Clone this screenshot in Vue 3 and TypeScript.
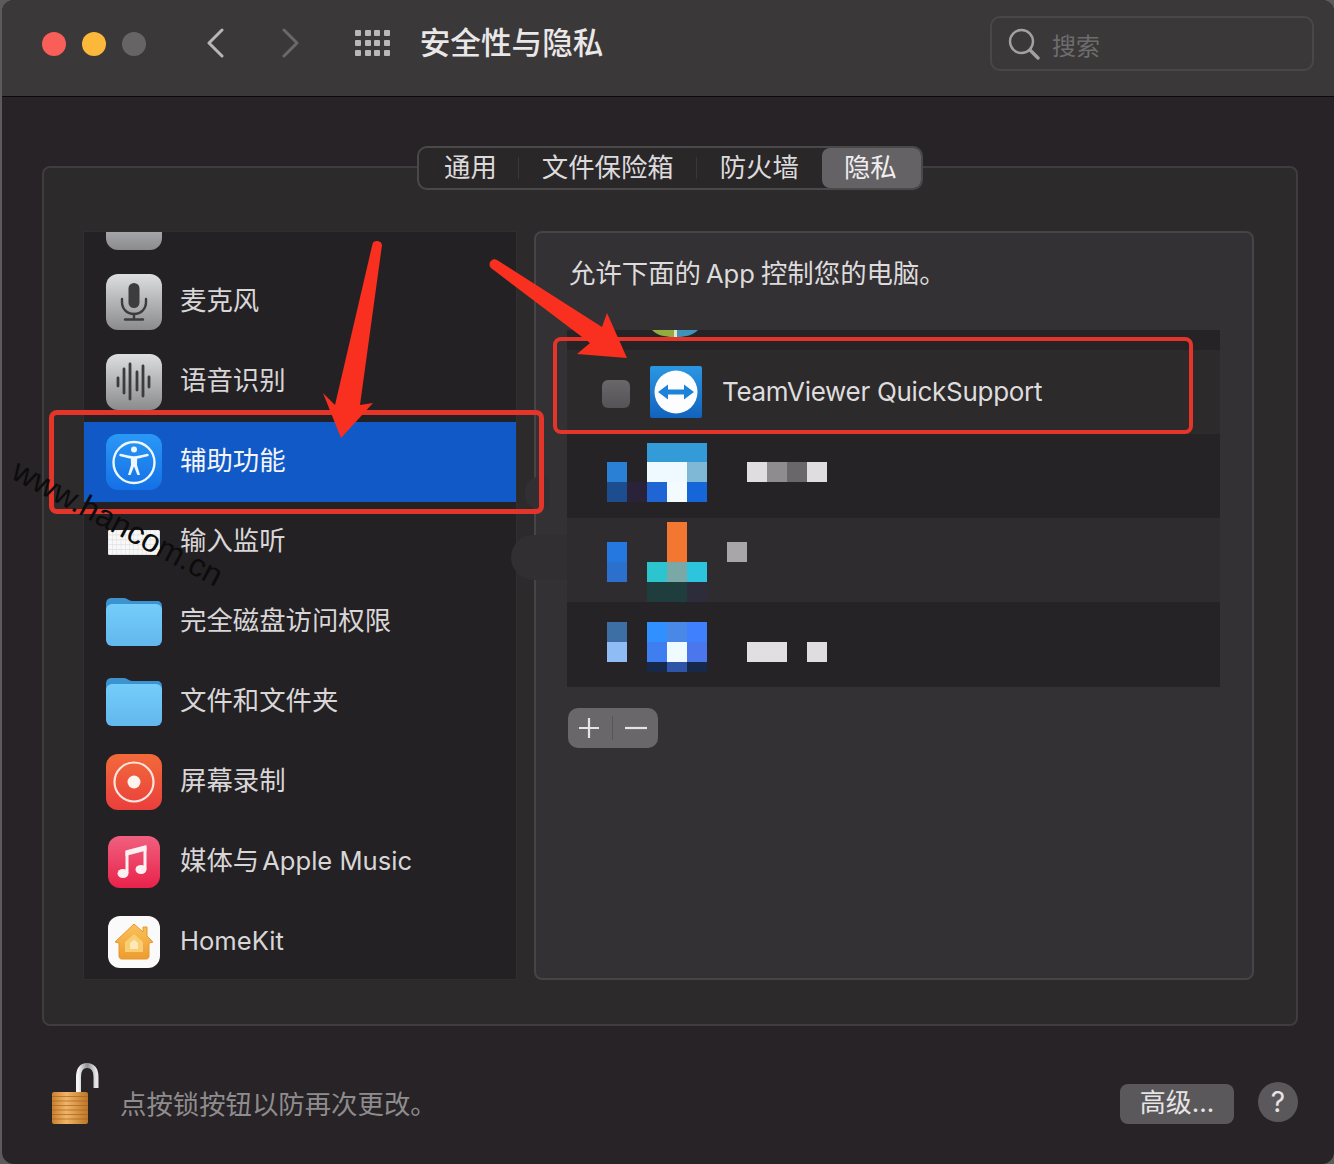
<template>
  <div class="screen">
    <div class="window">
      <header class="titlebar">
        <div class="lights">
          <span class="light red"></span>
          <span class="light yellow"></span>
          <span class="light gray"></span>
        </div>
        <svg class="chev" width="18" height="30" viewBox="0 0 18 30">
          <path d="M16 2 L3 15 L16 28" fill="none" stroke="#b9b6b8" stroke-width="3" stroke-linecap="round" stroke-linejoin="round" />
        </svg>
        <svg class="chev next" width="18" height="30" viewBox="0 0 18 30">
          <path d="M2 2 L15 15 L2 28" fill="none" stroke="#6b686a" stroke-width="3" stroke-linecap="round" stroke-linejoin="round" />
        </svg>
        <div class="apps">
          <span v-for="n in 12" :key="n"></span>
        </div>
        <h1 class="title">安全性与隐私</h1>
        <div class="search">
          <svg width="32" height="32" viewBox="0 0 32 32">
            <circle cx="13.5" cy="13.5" r="11.5" fill="none" stroke="#a3a0a2" stroke-width="2.4" />
            <path d="M22 22 L30 30" stroke="#a3a0a2" stroke-width="3.4" stroke-linecap="round" />
          </svg>
          <span>搜索</span>
        </div>
      </header>

      <main class="content">
        <section class="box">
          <nav class="tabs">
            <span
              v-for="(tab, index) in tabs"
              :key="tab"
              class="tab"
              :class="{ active: index === 3, first: index === 0, sep: index < 2 }"
            >{{ tab }}</span>
          </nav>

          <div class="columns">
            <ul class="services">
              <li
                v-for="item in services"
                :key="item.key"
                class="service"
                :class="{ selected: item.key === 'access' }"
              >
                <!-- иконки -->
                <svg v-if="item.key === 'camera'" class="icon" viewBox="0 0 56 56">
                  <rect width="56" height="56" rx="12" fill="url(#grayTile)" />
                </svg>
                <svg v-else-if="item.key === 'mic'" class="icon" viewBox="0 0 56 56">
                  <rect width="56" height="56" rx="12" fill="url(#grayTile)" />
                  <rect x="22.5" y="9" width="11" height="25" rx="5.5" fill="#3c3c3f" />
                  <path d="M16 25 V28 C16 35 21 40 28 40 C35 40 40 35 40 28 V25" fill="none" stroke="#3c3c3f" stroke-width="2.4" stroke-linecap="round" />
                  <path d="M28 40 V45.500 M19 45.500 H37" stroke="#3c3c3f" stroke-width="2.4" stroke-linecap="round" />
                </svg>
                <svg v-else-if="item.key === 'speech'" class="icon" viewBox="0 0 56 56">
                  <rect width="56" height="56" rx="12" fill="url(#grayTile)" />
                  <path d="M12 24 V32 M18 15 V39 M24 10 V45 M31 18 V36 M37 12 V42 M43 23 V33" stroke="#3c3c3f" stroke-width="2.800" stroke-linecap="round" />
                </svg>
                <svg v-else-if="item.key === 'access'" class="icon" viewBox="0 0 56 56">
                  <defs>
                    <linearGradient id="accessTile" x1="0" y1="0" x2="0" y2="1">
                      <stop offset="0" stop-color="#2a98f6" />
                      <stop offset="1" stop-color="#1470e6" />
                    </linearGradient>
                  </defs>
                  <rect width="56" height="56" rx="12" fill="url(#accessTile)" />
                  <circle cx="28" cy="28.500" r="20.500" fill="none" stroke="#eef6ff" stroke-width="2.400" />
                  <circle cx="28" cy="15.500" r="3" fill="#eef6ff" />
                  <path d="M14.500 21 C20 22.500 24 23.500 28 23.500 C32 23.500 36 22.500 41.500 21" fill="none" stroke="#eef6ff" stroke-width="2.400" stroke-linecap="round" />
                  <path d="M24.800 23 H31.200 L31 31 L34 41 H31.400 L28 32.500 L24.600 41 H22 L25 31 Z" fill="#eef6ff" />
                </svg>
                <svg v-else-if="item.key === 'input'" class="icon" viewBox="0 0 56 56">
                  <rect x="2" y="16" width="52" height="25" rx="1.500" fill="#dcdcde" />
                  <rect
                    v-for="k in keyCaps"
                    :key="k.id"
                    :x="k.x"
                    :y="k.y"
                    :width="k.w"
                    height="4.200"
                    fill="#f8f8f8"
                  />
                </svg>
                <svg v-else-if="item.key === 'disk' || item.key === 'files'" class="icon" viewBox="0 0 56 56">
                  <path d="M0 10 C0 6 2 4 6 4 H18 C21 4 23 7 26 7 H51 C54 7 56 9 56 12 V30 H0 Z" fill="#3d93cf" />
                  <rect y="10" width="56" height="42" rx="6" fill="url(#folderTile)" />
                </svg>
                <svg v-else-if="item.key === 'screen'" class="icon" viewBox="0 0 56 56">
                  <defs>
                    <linearGradient id="recTile" x1="0" y1="0" x2="0" y2="1">
                      <stop offset="0" stop-color="#f26a3a" />
                      <stop offset="1" stop-color="#ea3f3c" />
                    </linearGradient>
                  </defs>
                  <rect width="56" height="56" rx="12" fill="url(#recTile)" />
                  <circle cx="28" cy="28" r="19.500" fill="none" stroke="#fbe5df" stroke-width="2.200" />
                  <circle cx="28" cy="28" r="6.500" fill="#fdf3ef" />
                </svg>
                <svg v-else-if="item.key === 'music'" class="icon small" viewBox="0 0 52 52">
                  <defs>
                    <linearGradient id="musicTile" x1="0" y1="0" x2="0" y2="1">
                      <stop offset="0" stop-color="#f0607f" />
                      <stop offset="1" stop-color="#e9224a" />
                    </linearGradient>
                  </defs>
                  <rect width="52" height="52" rx="12" fill="url(#musicTile)" />
                  <path d="M17.500 14.500 L38.500 9 V14.500 L17.500 20 Z" fill="#fdf0f2" />
                  <path d="M19 15 V37 M37 11 V33" fill="none" stroke="#fdf0f2" stroke-width="3" />
                  <ellipse cx="15" cy="37.500" rx="5.500" ry="4.500" fill="#fdf0f2" />
                  <ellipse cx="33" cy="33.500" rx="5.500" ry="4.500" fill="#fdf0f2" />
                </svg>
                <svg v-else class="icon small" viewBox="0 0 52 52">
                  <defs>
                    <linearGradient id="homeFill" x1="0" y1="0" x2="0" y2="1">
                      <stop offset="0" stop-color="#f9c25a" />
                      <stop offset="1" stop-color="#ee9c2f" />
                    </linearGradient>
                  </defs>
                  <rect width="52" height="52" rx="12" fill="#fbfafa" />
                  <path d="M7 26 L26 8 L35 16 V11 H39 V20 L45 26 L41 27 V40 C41 42 40 43 38 43 H14 C12 43 11 42 11 40 V27 Z" fill="url(#homeFill)" stroke="#e8962c" stroke-width="1" stroke-linejoin="round" />
                  <path d="M17 26 L26 18 L35 26 V36 H17 Z" fill="#f8cd74" />
                  <path d="M22 27 L26 23.500 L30 27 V33 H22 Z" fill="#fde9b8" />
                </svg>
                <span class="label">
                  <span v-if="item.label" class="han">{{ item.label }}</span>
                  <span v-if="item.latin" class="latin">{{ item.latin }}</span>
                </span>
              </li>
            </ul>

            <div class="panel">
              <p class="hint">
                <span>允许下面的</span><span class="app">App</span><span>控制您的电脑。</span>
              </p>
              <div class="table">
                <div class="stub">
                  <svg width="46" height="7" viewBox="0 0 46 7">
                    <path d="M0 0 H22 V7 C12 7 5 5 0 0 Z" fill="#8fae3f" />
                    <path d="M22 0 H25 V7 H22 Z" fill="#e8e3cf" />
                    <path d="M25 0 H46 C41 5 34 7 25 7 Z" fill="#3d93b8" />
                  </svg>
                </div>
                <div class="row tv">
                  <span class="check"></span>
                  <svg class="tv-icon" width="52" height="52" viewBox="0 0 52 52">
                    <defs>
                      <linearGradient id="tvTile" x1="0" y1="0" x2="0" y2="1">
                        <stop offset="0" stop-color="#2b97e3" />
                        <stop offset="1" stop-color="#1262bd" />
                      </linearGradient>
                    </defs>
                    <rect width="52" height="52" rx="2" fill="url(#tvTile)" />
                    <circle cx="26" cy="26" r="21.500" fill="#fbfdff" />
                    <path d="M8 26 L18 18.500 V23.500 H34 V18.500 L44 26 L34 33.500 V28.500 H18 V33.500 Z" fill="#1d83d8" />
                  </svg>
                  <span class="tv-name">TeamViewer QuickSupport</span>
                </div>
                <svg
                  v-for="row in blurred"
                  :key="row.top"
                  class="row mosaic"
                  :class="{ dark: row.dark }"
                  width="653"
                  :height="row.height"
                  :viewBox="`567 ${row.top} 653 ${row.height}`"
                >
                  <rect
                    v-for="(c, i) in row.cells"
                    :key="i"
                    :x="c[0]"
                    :y="c[1]"
                    :width="c[2]"
                    :height="c[3]"
                    :fill="c[4]"
                  />
                </svg>
              </div>
              <div class="addremove">
                <span>
                  <svg width="22" height="22" viewBox="0 0 22 22">
                    <path d="M11 1 V21 M1 11 H21" stroke="#e6e4e6" stroke-width="2.200" />
                  </svg>
                </span>
                <i></i>
                <span>
                  <svg width="22" height="22" viewBox="0 0 22 22">
                    <path d="M0 11 H22" stroke="#e6e4e6" stroke-width="2.200" />
                  </svg>
                </span>
              </div>
            </div>
          </div>
        </section>

        <footer class="footer">
          <svg class="lock" width="48" height="62" viewBox="0 0 48 62">
            <defs>
              <linearGradient id="shackle" x1="0" y1="0" x2="1" y2="0">
                <stop offset="0" stop-color="#f4f4f6" />
                <stop offset="0.5" stop-color="#8f9095" />
                <stop offset="1" stop-color="#e6e6ea" />
              </linearGradient>
              <linearGradient id="lockBody" x1="0" y1="0" x2="1" y2="0">
                <stop offset="0" stop-color="#c97f2e" />
                <stop offset="0.4" stop-color="#f0b568" />
                <stop offset="1" stop-color="#bd7526" />
              </linearGradient>
            </defs>
            <path d="M26.500 30 V14 C26.500 6 30 2.500 35 2.500 C40 2.500 44 6 44 14 V25" fill="none" stroke="url(#shackle)" stroke-width="5" />
            <rect x="0" y="29" width="36" height="32" rx="2" fill="url(#lockBody)" />
            <path d="M0 33.500 H36 M0 38 H36 M0 42.500 H36 M0 47 H36 M0 51.500 H36 M0 56 H36" stroke="#a9641e" stroke-width="1" opacity="0.7" />
          </svg>
          <span class="lock-text">点按锁按钮以防再次更改。</span>
          <button class="advanced">高级...</button>
          <span class="help">?</span>
        </footer>
      </main>
    </div>

    <!-- общие градиенты для иконок -->
    <svg class="defs" width="0" height="0">
      <defs>
        <linearGradient id="grayTile" x1="0" y1="0" x2="0" y2="1">
          <stop offset="0" stop-color="#dcdee0" />
          <stop offset="1" stop-color="#8b8b8c" />
        </linearGradient>
        <linearGradient id="folderTile" x1="0" y1="0" x2="0" y2="1">
          <stop offset="0" stop-color="#74cdfb" />
          <stop offset="1" stop-color="#62b7ec" />
        </linearGradient>
      </defs>
    </svg>

    <!-- следы замазки и разметка поверх скриншота -->
    <div class="smudge smudge-low"></div>
    <div class="smudge smudge-high"></div>
    <div class="mark mark-list"></div>
    <div class="mark mark-row"></div>
    <svg class="arrows" width="1334" height="1164" viewBox="0 0 1334 1164">
      <path d="M372.500 244 C373 240 381.500 240 382 245 L360 405 L373 403 L341 438 L323 393 L335 405 Z" fill="#f9301f" />
      <path d="M497 260 L602 327 L607 313 L627 358 L577 354 L590 343 L491 268 C487 264 492 257 497 260 Z" fill="#f9301f" />
    </svg>
    <span class="watermark">www.hancom.cn</span>
  </div>
</template>

<script setup lang="ts">
type Cell = [number, number, number, number, string]

interface BlurredRow {
  top: number
  height: number
  dark: boolean
  cells: Cell[]
}

const tabs = ['通用', '文件保险箱', '防火墙', '隐私']

const services = [
  { key: 'camera', label: '' },
  { key: 'mic', label: '麦克风' },
  { key: 'speech', label: '语音识别' },
  { key: 'access', label: '辅助功能' },
  { key: 'input', label: '输入监听' },
  { key: 'disk', label: '完全磁盘访问权限' },
  { key: 'files', label: '文件和文件夹' },
  { key: 'screen', label: '屏幕录制' },
  { key: 'music', label: '媒体与', latin: 'Apple Music' },
  { key: 'home', label: '', latin: 'HomeKit' },
]

// клавиши маленькой клавиатуры
const keyCaps: { id: string; x: number; y: number; w: number }[] = []
for (let r = 0; r < 5; r++) {
  for (let c = 0; c < 12; c++) {
    keyCaps.push({ id: `${r}-${c}`, x: 2.5 + c * 4.25, y: 16.4 + r * 4.9, w: 3.8 })
  }
}

// пикселизованные строки таблицы, координаты как на экране
const blurred: BlurredRow[] = [
  {
    top: 434,
    height: 84,
    dark: true,
    cells: [
      [607, 462, 20, 20, '#2a80d5'],
      [607, 482, 20, 20, '#1c4d8f'],
      [627, 482, 20, 20, '#2a2238'],
      [647, 443, 60, 19, '#339bd8'],
      [647, 462, 40, 20, '#eefaff'],
      [687, 462, 20, 20, '#7fb8d6'],
      [647, 482, 20, 20, '#1f66d4'],
      [667, 482, 20, 20, '#f4fbff'],
      [687, 482, 20, 20, '#1566d8'],
      [747, 462, 20, 20, '#e0dde0'],
      [767, 462, 20, 20, '#8f8c8f'],
      [787, 462, 20, 20, '#6a676a'],
      [807, 462, 20, 20, '#e0dde0'],
    ],
  },
  {
    top: 518,
    height: 84,
    dark: false,
    cells: [
      [607, 542, 20, 20, '#2478e0'],
      [607, 562, 20, 20, '#2a70cc'],
      [667, 522, 20, 40, '#f27730'],
      [647, 562, 20, 20, '#2cc5cf'],
      [667, 562, 20, 20, '#79a8a6'],
      [687, 562, 20, 20, '#2cc5dd'],
      [647, 582, 40, 20, '#1e3d3c'],
      [687, 582, 20, 20, '#2c2c3a'],
      [727, 542, 20, 20, '#a9a6a9'],
    ],
  },
  {
    top: 602,
    height: 85,
    dark: true,
    cells: [
      [607, 622, 20, 20, '#3d6fa5'],
      [607, 642, 20, 20, '#8fbcf5'],
      [647, 622, 20, 20, '#3090ff'],
      [667, 622, 20, 20, '#4a88e8'],
      [687, 622, 20, 20, '#3f80ff'],
      [647, 642, 20, 20, '#3f7ef0'],
      [667, 642, 20, 20, '#f0fbff'],
      [687, 642, 20, 20, '#4a78ec'],
      [647, 662, 20, 10, '#17294a'],
      [667, 662, 20, 10, '#2f55a8'],
      [687, 662, 20, 10, '#17294a'],
      [747, 642, 40, 20, '#e2dfe2'],
      [807, 642, 20, 20, '#e0dde0'],
    ],
  },
]
</script>

<style>
html,
body {
  margin: 0;
  background: #5c5a5b;
}
</style>

<style scoped>
* {
  box-sizing: border-box;
}

.screen {
  position: relative;
  width: 1334px;
  height: 1164px;
  overflow: hidden;
  padding-left: 2px;
  font-family: Inter, "Noto Sans CJK SC", "Noto Sans", sans-serif;
}

.window {
  width: 1332px;
  height: 1164px;
  display: flex;
  flex-direction: column;
  background: #272326;
  border-radius: 12px;
  overflow: hidden;
}

.titlebar {
  height: 97px;
  flex: none;
  display: flex;
  align-items: center;
  padding: 0 20px 9px 40px;
  background: #3b3839;
  border-bottom: 1px solid #0c0a0b;
}

.lights {
  display: flex;
  gap: 16px;
  margin-right: 60px;
}

.light {
  width: 24px;
  height: 24px;
  border-radius: 50%;
}
.light.red {
  background: #f95f58;
}
.light.yellow {
  background: #fbb83a;
}
.light.gray {
  background: #676466;
}

.chev {
  display: block;
  margin-top: -2px;
}
.chev.next {
  margin-left: 58px;
}

.apps {
  display: grid;
  grid-template-columns: repeat(4, 6px);
  gap: 4px 3.6px;
  margin: -2px 0 0 55px;
}
.apps span {
  width: 6px;
  height: 6px;
  border-radius: 1px;
  background: #bab7b9;
}

.title {
  margin: 0 0 2px 30px;
  font-size: 30.6px;
  font-weight: 500;
  line-height: 40px;
  color: #e9e7e8;
}

.search {
  margin-left: auto;
  width: 324px;
  height: 55px;
  display: flex;
  align-items: center;
  gap: 12px;
  padding-left: 16px;
  border: 2px solid #4a4749;
  border-radius: 10px;
  font-size: 24px;
  color: #6f6c6e;
}
.search span {
  margin-top: 1px;
}

.content {
  flex: 1;
  display: flex;
  flex-direction: column;
  padding: 69px 36px 0 40px;
}

.box {
  height: 860px;
  flex: none;
  padding: 0 39px;
  background: #2d2a2c;
  border: 2px solid #403d3f;
  border-radius: 8px;
}

.tabs {
  width: 506px;
  height: 44px;
  margin: -22px auto 0;
  display: flex;
  align-items: center;
  padding: 0 1px;
  background: #2a2729;
  border: 2px solid #4b484a;
  border-radius: 10px;
  font-size: 26.4px;
  color: #dcdadb;
}

.tab {
  position: relative;
  height: 40px;
  line-height: 38px;
  padding: 0 23px;
  white-space: nowrap;
}
.tab.first {
  padding: 0 22px 0 24px;
}
.tab.sep::after {
  content: '';
  position: absolute;
  right: 0;
  top: 9px;
  width: 1px;
  height: 22px;
  background: #3b383a;
}
.tab.active {
  padding: 0 24px 0 22px;
  background: #656265;
  border-radius: 8px;
  color: #efedee;
}

.columns {
  display: flex;
  gap: 17px;
  margin-top: 41px;
}

.services {
  width: 434px;
  height: 749px;
  flex: none;
  margin: 0;
  padding: 0;
  list-style: none;
  overflow: hidden;
  background: #242124;
  border: 1px solid #312e30;
}

.service {
  height: 80px;
  display: flex;
  align-items: center;
  padding-left: 22px;
  font-size: 26.4px;
  color: #d8d6d7;
}
.service:first-child {
  margin-top: -50px;
}
.service.selected {
  background: #1059c6;
  color: #f4f5f8;
}

.icon {
  width: 56px;
  height: 56px;
  flex: none;
  display: block;
}
.icon.small {
  width: 52px;
  height: 52px;
  margin: 0 2px;
}

.label {
  margin: 0 0 4px 18px;
  line-height: 36px;
  white-space: nowrap;
}

.latin {
  font-size: 25.6px;
}
.han + .latin {
  margin-left: 3px;
}

.panel {
  width: 720px;
  height: 749px;
  flex: none;
  padding: 20px 32px 0 31px;
  background: #343134;
  border: 2px solid #474447;
  border-radius: 8px;
}

.hint {
  height: 40px;
  margin: 0 0 37px 2px;
  font-size: 26.4px;
  line-height: 40px;
  color: #dddbdc;
}

.app {
  margin: 0 6px 0 5px;
  font-size: 25.6px;
}

.table {
  width: 653px;
  height: 357px;
  background: #262326;
}

.stub {
  height: 20px;
  padding-left: 85px;
  overflow: hidden;
}
.stub svg {
  display: block;
}

.row {
  display: block;
}
.row.tv {
  height: 84px;
  display: flex;
  align-items: center;
  padding-left: 35px;
  background: #2d2a2c;
}

.check {
  width: 28px;
  height: 28px;
  margin-top: 4px;
  border-radius: 6px;
  background: linear-gradient(#6a676a, #565356);
}

.tv-icon {
  margin-left: 20px;
}

.tv-name {
  margin: 0 0 2px 20px;
  font-size: 26px;
  letter-spacing: -0.3px;
  color: #dedcdd;
  white-space: nowrap;
}

.mosaic {
  background: #2f2c2f;
}
.mosaic.dark {
  background: #262326;
}

.addremove {
  width: 90px;
  height: 40px;
  margin: 21px 0 0 1px;
  display: flex;
  align-items: center;
  background: #6a676a;
  border-radius: 10px;
}
.addremove span {
  width: 45px;
  display: flex;
  justify-content: center;
}
.addremove span:first-child {
  padding-right: 3px;
}
.addremove i {
  width: 1px;
  height: 24px;
  margin-left: -1px;
  background: #59565a;
}

.footer {
  flex: 1;
  display: flex;
  align-items: flex-start;
  padding-top: 37px;
  margin-left: 10px;
}

.lock {
  flex: none;
}

.lock-text {
  margin: 21px 0 0 20px;
  font-size: 26.4px;
  line-height: 40px;
  color: #8f8c8e;
}

.advanced {
  margin: 21px 0 0 auto;
  width: 114px;
  height: 40px;
  padding: 0 0 2px;
  border: 0;
  border-radius: 8px;
  background: #5b585b;
  font-family: inherit;
  font-size: 26px;
  line-height: 36px;
  color: #e6e4e5;
}

.help {
  margin: 19px 0 0 24px;
  width: 40px;
  height: 40px;
  border-radius: 50%;
  background: #5b585b;
  font-size: 28px;
  line-height: 40px;
  text-align: center;
  color: #e6e4e5;
}

.defs {
  position: absolute;
}

.smudge {
  position: absolute;
  background: #322f32;
}
.smudge-low {
  left: 511px;
  top: 535px;
  width: 56px;
  height: 45px;
  border-radius: 23px 0 0 23px;
}
.smudge-high {
  left: 525px;
  top: 477px;
  width: 24px;
  height: 32px;
  border-radius: 14px 0 0 14px;
}

.mark {
  position: absolute;
  border-style: solid;
  border-color: #e5352b;
  border-radius: 8px;
}
.mark-list {
  left: 49px;
  top: 410px;
  width: 495px;
  height: 104px;
  border-width: 5px;
}
.mark-row {
  left: 553px;
  top: 337px;
  width: 640px;
  height: 97px;
  border-width: 4px;
}

.arrows {
  position: absolute;
  left: 0;
  top: 0;
  pointer-events: none;
}

.watermark {
  position: absolute;
  left: 15px;
  top: 452px;
  font-family: "Liberation Sans", sans-serif;
  font-size: 32px;
  line-height: 32px;
  color: #0c0c0c;
  white-space: nowrap;
  transform: rotate(28deg);
  transform-origin: 0 50%;
}
</style>
